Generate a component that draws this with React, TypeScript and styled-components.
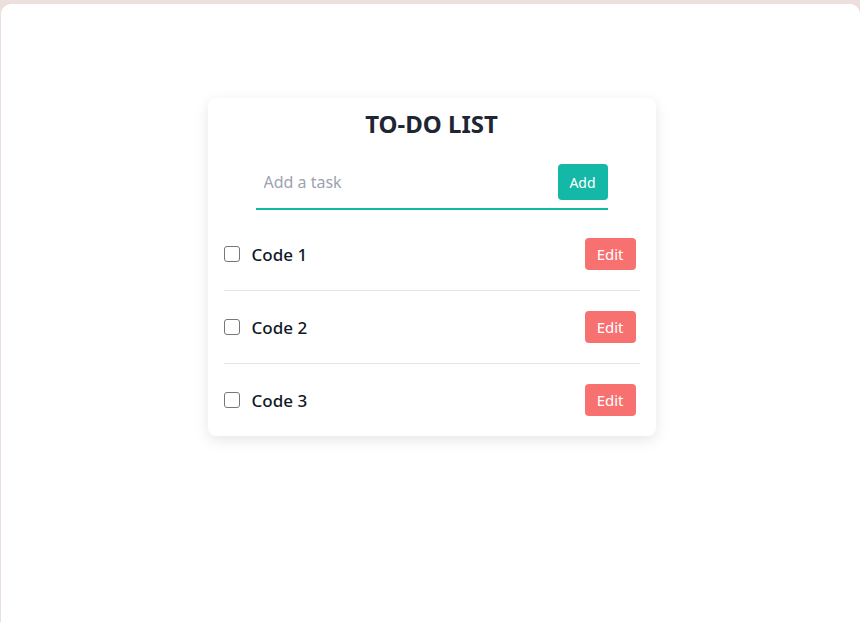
import React, { useState } from "react";
import styled, { createGlobalStyle } from "styled-components";

const Global = createGlobalStyle`
  html, body { margin: 0; padding: 0; height: 100%; }
  body {
    background: #eddfdc;
    font-family: "Noto Sans", "Open Sans", sans-serif;
    overflow: hidden;
  }
  #root { height: 100%; }
`;

const Page = styled.div`
  margin: 4px 0 0 1px;
  height: calc(100vh - 4px);
  background: #ffffff;
  border-radius: 10px 10px 0 0;
  padding-top: 94px;
  padding-left: 2px;
  box-sizing: border-box;
`;

const Card = styled.div`
  width: 448px;
  margin: 0 auto;
  box-sizing: border-box;
  background: #ffffff;
  border-radius: 8px;
  padding: 12px 16px 0;
  box-shadow: 0 4px 14px rgba(0, 0, 0, 0.1);
`;

const Title = styled.h1`
  margin: 0;
  text-align: center;
  font-size: 24px;
  line-height: 28px;
  font-weight: 700;
  color: #1e2533;
`;

const InputRow = styled.form`
  margin: 26px 32px 8px;
  display: flex;
  align-items: center;
  padding-bottom: 8px;
  border-bottom: 2px solid #14b8a6;
`;

const TaskInput = styled.input`
  flex: 1;
  border: none;
  outline: none;
  background: transparent;
  font-family: inherit;
  font-size: 16px;
  padding: 0 8px;
  height: 36px;
  color: #1e2533;
  &::placeholder { color: #9ca3af; }
`;

const AddButton = styled.button`
  width: 50px;
  height: 36px;
  border: none;
  border-radius: 4px;
  background: #14b8a6;
  color: #ffffff;
  font-family: inherit;
  font-size: 14px;
  cursor: pointer;
`;

const List = styled.ul`
  list-style: none;
  margin: 0;
  padding: 0;
`;

const Item = styled.li<{ $last: boolean }>`
  display: flex;
  align-items: center;
  height: 72px;
  padding-right: 4px;
  border-bottom: ${(p) => (p.$last ? "none" : "1px solid #e5e5e5")};
`;

const Check = styled.input`
  appearance: none;
  width: 16px;
  height: 16px;
  margin: 0 12px 0 0;
  border: 1px solid #767676;
  border-radius: 3px;
  background: #fff;
  box-sizing: border-box;
`;

const Label = styled.span`
  flex: 1;
  font-size: 17px;
  font-weight: 500;
  color: #111827;
`;

const EditButton = styled.button`
  height: 32px;
  padding: 0 12px;
  border: none;
  border-radius: 4px;
  background: #f87171;
  color: #ffffff;
  font-family: inherit;
  font-size: 15px;
  cursor: pointer;
`;

export default function App() {
  const [tasks] = useState(["Code 1", "Code 2", "Code 3"]);
  return (
    <>
      <Global />
      <Page>
        <Card>
          <Title>TO-DO LIST</Title>
          <InputRow onSubmit={(e) => e.preventDefault()}>
            <TaskInput placeholder="Add a task" />
            <AddButton type="submit">Add</AddButton>
          </InputRow>
          <List>
            {tasks.map((t, i) => (
              <Item key={t} $last={i === tasks.length - 1}>
                <Check type="checkbox" />
                <Label>{t}</Label>
                <EditButton>Edit</EditButton>
              </Item>
            ))}
          </List>
        </Card>
      </Page>
    </>
  );
}
